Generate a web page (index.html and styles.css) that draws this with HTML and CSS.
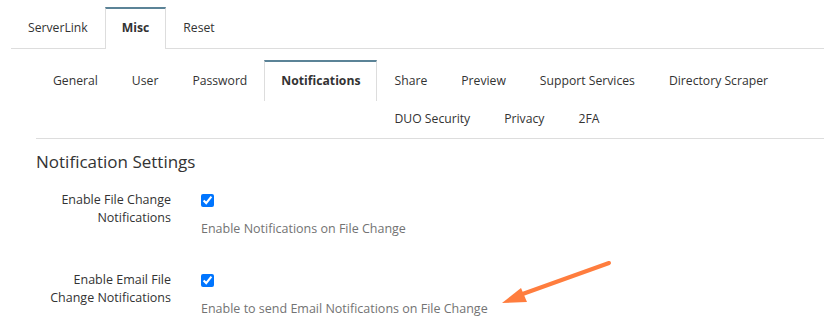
FILE: index.html
```html
<!DOCTYPE html>
<html lang="en">
<head>
    <meta charset="UTF-8">
    <meta name="viewport" content="width=device-width, initial-scale=1.0">
    <title>Misc - Notifications</title>
    <link rel="stylesheet" href="styles.css">
</head>

<body>
    <ul class="nav-tabs main-tabs">
        <li><a href="#">ServerLink</a></li>
        <li class="active"><a href="#">Misc</a></li>
        <li><a href="#">Reset</a></li>
    </ul>

    <div class="tab-content">
        <ul class="nav-tabs sub-tabs">
            <li><a href="#">General</a></li>
            <li><a href="#">User</a></li>
            <li><a href="#">Password</a></li>
            <li class="active"><a href="#">Notifications</a></li>
            <li><a href="#">Share</a></li>
            <li><a href="#">Preview</a></li>
            <li><a href="#">Support Services</a></li>
            <li><a href="#">Directory Scraper</a></li>
            <li><a href="#">DUO Security</a></li>
            <li><a href="#">Privacy</a></li>
            <li><a href="#">2FA</a></li>
        </ul>

        <h3 class="section-title">Notification Settings</h3>

        <form class="settings-form">
            <div class="form-row">
                <label class="form-label" for="fileChange">Enable File Change<br>Notifications</label>
                <div class="form-control">
                    <div class="check"><input type="checkbox" id="fileChange" checked></div>
                    <p class="help">Enable Notifications on File Change</p>
                </div>
            </div>
            <div class="form-row">
                <label class="form-label" for="emailChange">Enable Email File<br>Change Notifications</label>
                <div class="form-control">
                    <div class="check"><input type="checkbox" id="emailChange" checked></div>
                    <p class="help">Enable to send Email Notifications on File Change</p>
                </div>
            </div>
        </form>
    </div>

    <!-- callout arrow drawn over the page -->
    <svg class="callout" width="130" height="60" viewBox="0 0 130 60">
        <line x1="114" y1="8" x2="22" y2="41" stroke="#ff7d3e" stroke-width="4" stroke-linecap="round"/>
        <polygon points="7,48 26,33 32,47" fill="#ff7d3e"/>
    </svg>
</body>

</html>
```

FILE: styles.css
```css
body {
    margin: 0;
    padding: 9px 0 0 11px;
    font-family: 'Open Sans', 'Noto Sans', sans-serif;
    font-size: 12.5px;
    color: #333;
    background: #fff;
    position: relative;
}

ul {
    list-style: none;
    margin: 0;
    padding: 0;
}

a {
    text-decoration: none;
    color: #333;
}

.nav-tabs {
    font-size: 12.2px;
}

.nav-tabs a {
    display: block;
    padding: 10px 16px;
    line-height: 18px;
    border: 1px solid transparent;
    border-top: 0;
    border-bottom: 0;
}

.nav-tabs .active a {
    font-weight: 700;
    border-color: #ddd;
    border-top: 2px solid #5b8397;
    margin-top: -2px;
    background: #fff;
}

/* top level tabs */
.main-tabs {
    display: flex;
    border-bottom: 1px solid #ddd;
}

.main-tabs li {
    margin-bottom: -1px;
}

.main-tabs a {
    padding-bottom: 11px;
}

.main-tabs .active a {
    padding-bottom: 12px;
}

.tab-content {
    padding-left: 25px;
}

/* second level tabs, floated so the 2nd row tucks in after the taller active tab */
.sub-tabs {
    display: flow-root;
    margin-top: 13px;
    border-bottom: 1px solid #ddd;
}

.sub-tabs li {
    float: left;
}

.sub-tabs .active a {
    padding-bottom: 11px;
}

.section-title {
    margin: 13px 0 0;
    font-size: 17px;
    line-height: 20px;
    font-weight: 400;
    color: #333;
}

.settings-form {
    margin-top: 19px;
}

.form-row {
    display: grid;
    grid-template-columns: 135px 1fr;
    column-gap: 30px;
    margin-bottom: 33px;
}

.form-label {
    text-align: right;
    line-height: 18px;
}

.check {
    height: 19px;
}

.check input {
    margin: 3px 0 0 0;
    width: 13px;
    height: 13px;
}

.help {
    margin: 10px 0 0;
    line-height: 18px;
    color: #737373;
}

.callout {
    position: absolute;
    left: 495px;
    top: 255px;
}
```
